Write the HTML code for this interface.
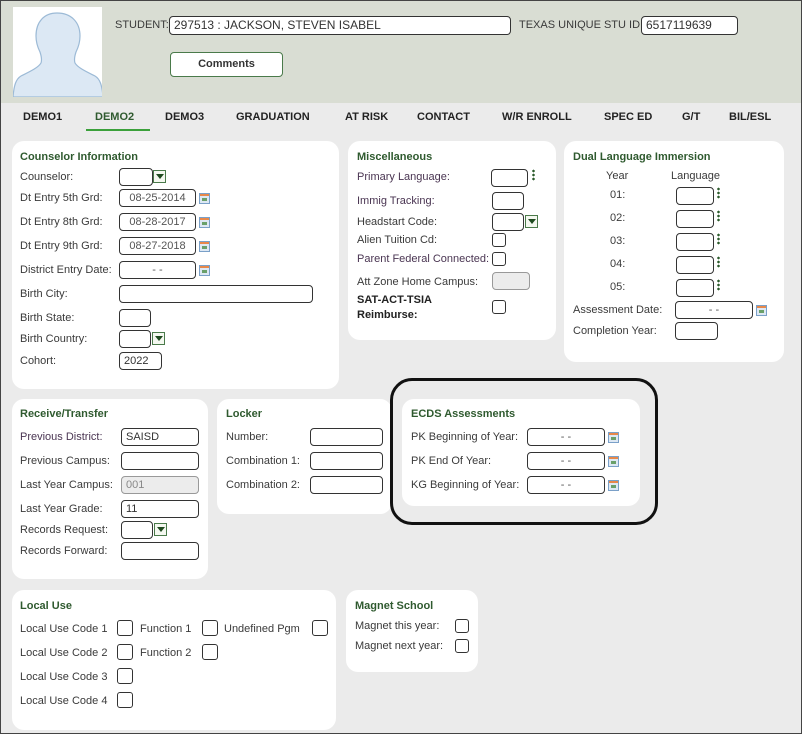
<!DOCTYPE html><html><head><meta charset="utf-8"><style>
*{box-sizing:border-box;margin:0;padding:0}
body{width:802px;height:734px;position:relative;background:#ebebeb;font-family:"Liberation Sans",sans-serif;overflow:hidden}
#frame{position:absolute;left:0;top:0;width:802px;height:734px;border:1px solid #444;pointer-events:none;z-index:9}
.hd{position:absolute;left:0;top:0;width:802px;height:103px;background:#d9ddd3}
.p{position:absolute;background:#fff;border-radius:12px}
.l{position:absolute;font-size:11px;line-height:14px;color:#3a3a3a;white-space:nowrap}
.pu{color:#4a3552}
.t{position:absolute;font-size:11px;line-height:14px;color:#2f5a2f;font-weight:bold;white-space:nowrap}
.i{position:absolute;height:18px;border:1.3px solid #333;border-radius:4px;background:#fff;font-size:11px;line-height:16px;padding-left:4px;color:#333;white-space:nowrap}
.g{background:#ececec;border-color:#999;color:#888}
.c{position:absolute;width:14px;height:14px;border:1.3px solid #333;border-radius:3px;background:#fff}
.dd{position:absolute;width:13px;height:13px;border:1px solid #4a7a4a;background:#f4f8f0}
.dd:after{content:"";position:absolute;left:2px;top:3px;border-left:4px solid transparent;border-right:4px solid transparent;border-top:5px solid #1f4a1f}
.cal{position:absolute;width:11px;height:11px;border:1px solid #7aa0c8;background:#dde8f4}
.cal:before{content:"";position:absolute;left:0;top:0;width:9px;height:2px;background:#e8884a}
.cal:after{content:"";position:absolute;left:2px;top:4px;width:5px;height:3px;background:#6aa06a}
.dots{position:absolute;width:3px;height:12px;background:radial-gradient(circle,#2a5a2a 1.2px,transparent 1.4px) 0 0/3px 4px}
.tab{position:absolute;top:111px;font-size:11px;font-weight:bold;color:#222;white-space:nowrap}
.dt{text-align:center;padding:0;color:#555}
</style></head><body>
<div class="hd"></div>
<div style="position:absolute;left:13px;top:7px;width:89px;height:90px;background:#fff;overflow:hidden">
<svg width="89" height="90" viewBox="0 0 89 90"><path d="M44 6c-13 0-21 9-21 23 0 7 2 12 4 16 1 3 2 8 1 11-3 5-12 9-20 13-5 3-7 9-8 21h90c-1-12-3-18-8-21-8-4-17-8-20-13-1-3 0-8 1-11 2-4 4-9 4-16 0-14-9-23-23-23z" fill="#dce8f4" stroke="#9cbad6" stroke-width="1.2"/></svg></div>
<div class="l" style="left:115px;top:18px">STUDENT:</div>
<div class="i" style="left:169px;top:16px;width:342px;height:19px;font-size:12px">297513 : JACKSON, STEVEN ISABEL</div>
<div class="l" style="left:519px;top:18px">TEXAS UNIQUE STU ID:</div>
<div class="i" style="left:641px;top:16px;width:97px;height:19px;font-size:12px">6517119639</div>
<div style="position:absolute;left:170px;top:52px;width:113px;height:25px;border:1.5px solid #4a7a4a;border-radius:4px;background:#fff;font-size:11px;font-weight:bold;color:#333;text-align:center;line-height:22px">Comments</div>

<div class="tab" style="left:23px">DEMO1</div>
<div class="tab" style="left:95px;color:#2f5a2f">DEMO2</div>
<div style="position:absolute;left:86px;top:129px;width:64px;height:2px;background:#3aa03a"></div>
<div class="tab" style="left:165px">DEMO3</div>
<div class="tab" style="left:236px">GRADUATION</div>
<div class="tab" style="left:345px">AT RISK</div>
<div class="tab" style="left:417px">CONTACT</div>
<div class="tab" style="left:502px">W/R ENROLL</div>
<div class="tab" style="left:604px">SPEC ED</div>
<div class="tab" style="left:682px">G/T</div>
<div class="tab" style="left:729px">BIL/ESL</div>

<div class="p" style="left:12px;top:141px;width:327px;height:248px"></div>
<div class="p" style="left:348px;top:141px;width:208px;height:199px"></div>
<div class="p" style="left:564px;top:141px;width:220px;height:221px"></div>
<div class="p" style="left:12px;top:399px;width:196px;height:180px"></div>
<div class="p" style="left:217px;top:399px;width:175px;height:115px"></div>
<div class="p" style="left:402px;top:399px;width:238px;height:107px"></div>
<div style="position:absolute;left:390px;top:378px;width:268px;height:147px;border:3px solid #111;border-radius:22px"></div>
<div class="p" style="left:12px;top:590px;width:324px;height:140px"></div>
<div class="p" style="left:346px;top:590px;width:132px;height:82px"></div>

<div class="t" style="left:20px;top:150px">Counselor Information</div>
<div class="l" style="left:20px;top:170px">Counselor:</div><div class="i" style="left:119px;top:168px;width:34px"></div><div class="dd" style="left:153px;top:170px"></div>
<div class="l" style="left:20px;top:191px">Dt Entry 5th Grd:</div><div class="i dt" style="left:119px;top:189px;width:77px">08-25-2014</div><div class="cal" style="left:199px;top:193px"></div>
<div class="l" style="left:20px;top:215px">Dt Entry 8th Grd:</div><div class="i dt" style="left:119px;top:213px;width:77px">08-28-2017</div><div class="cal" style="left:199px;top:217px"></div>
<div class="l" style="left:20px;top:239px">Dt Entry 9th Grd:</div><div class="i dt" style="left:119px;top:237px;width:77px">08-27-2018</div><div class="cal" style="left:199px;top:241px"></div>
<div class="l" style="left:20px;top:263px">District Entry Date:</div><div class="i dt" style="left:119px;top:261px;width:77px">- -</div><div class="cal" style="left:199px;top:265px"></div>
<div class="l" style="left:20px;top:287px">Birth City:</div><div class="i" style="left:119px;top:285px;width:194px"></div>
<div class="l" style="left:20px;top:311px">Birth State:</div><div class="i" style="left:119px;top:309px;width:32px"></div>
<div class="l" style="left:20px;top:332px">Birth Country:</div><div class="i" style="left:119px;top:330px;width:32px"></div><div class="dd" style="left:152px;top:332px"></div>
<div class="l" style="left:20px;top:354px">Cohort:</div><div class="i" style="left:119px;top:352px;width:43px">2022</div>

<div class="t" style="left:357px;top:150px">Miscellaneous</div>
<div class="l pu" style="left:357px;top:170px">Primary Language:</div><div class="i" style="left:491px;top:169px;width:37px"></div><div class="dots" style="left:532px;top:169px"></div>
<div class="l pu" style="left:357px;top:194px">Immig Tracking:</div><div class="i" style="left:492px;top:192px;width:32px"></div>
<div class="l" style="left:357px;top:215px">Headstart Code:</div><div class="i" style="left:492px;top:213px;width:32px"></div><div class="dd" style="left:525px;top:215px"></div>
<div class="l" style="left:357px;top:233px">Alien Tuition Cd:</div><div class="c" style="left:492px;top:233px"></div>
<div class="l pu" style="left:357px;top:252px">Parent Federal Connected:</div><div class="c" style="left:492px;top:252px"></div>
<div class="l" style="left:357px;top:275px">Att Zone Home Campus:</div><div class="i g" style="left:492px;top:272px;width:38px"></div>
<div class="l" style="left:357px;top:293px;font-weight:bold;color:#222;line-height:15px">SAT-ACT-TSIA<br>Reimburse:</div><div class="c" style="left:492px;top:300px"></div>

<div class="t" style="left:573px;top:150px">Dual Language Immersion</div>
<div class="l" style="left:606px;top:169px">Year</div><div class="l" style="left:671px;top:169px">Language</div>
<div class="l" style="left:610px;top:188px">01:</div><div class="i" style="left:676px;top:187px;width:38px"></div><div class="dots" style="left:717px;top:187px"></div>
<div class="l" style="left:610px;top:211px">02:</div><div class="i" style="left:676px;top:210px;width:38px"></div><div class="dots" style="left:717px;top:210px"></div>
<div class="l" style="left:610px;top:234px">03:</div><div class="i" style="left:676px;top:233px;width:38px"></div><div class="dots" style="left:717px;top:233px"></div>
<div class="l" style="left:610px;top:257px">04:</div><div class="i" style="left:676px;top:256px;width:38px"></div><div class="dots" style="left:717px;top:256px"></div>
<div class="l" style="left:610px;top:280px">05:</div><div class="i" style="left:676px;top:279px;width:38px"></div><div class="dots" style="left:717px;top:279px"></div>
<div class="l" style="left:573px;top:303px">Assessment Date:</div><div class="i dt" style="left:675px;top:301px;width:78px">- -</div><div class="cal" style="left:756px;top:305px"></div>
<div class="l" style="left:573px;top:324px">Completion Year:</div><div class="i" style="left:675px;top:322px;width:43px"></div>

<div class="t" style="left:20px;top:407px">Receive/Transfer</div>
<div class="l pu" style="left:20px;top:430px">Previous District:</div><div class="i" style="left:121px;top:428px;width:78px">SAISD</div>
<div class="l" style="left:20px;top:454px">Previous Campus:</div><div class="i" style="left:121px;top:452px;width:78px"></div>
<div class="l" style="left:20px;top:478px">Last Year Campus:</div><div class="i g" style="left:121px;top:476px;width:78px">001</div>
<div class="l" style="left:20px;top:502px">Last Year Grade:</div><div class="i" style="left:121px;top:500px;width:78px">11</div>
<div class="l" style="left:20px;top:523px">Records Request:</div><div class="i" style="left:121px;top:521px;width:32px"></div><div class="dd" style="left:154px;top:523px"></div>
<div class="l" style="left:20px;top:544px">Records Forward:</div><div class="i" style="left:121px;top:542px;width:78px"></div>

<div class="t" style="left:226px;top:407px">Locker</div>
<div class="l" style="left:226px;top:430px">Number:</div><div class="i" style="left:310px;top:428px;width:73px"></div>
<div class="l" style="left:226px;top:454px">Combination 1:</div><div class="i" style="left:310px;top:452px;width:73px"></div>
<div class="l" style="left:226px;top:478px">Combination 2:</div><div class="i" style="left:310px;top:476px;width:73px"></div>

<div class="t" style="left:411px;top:407px">ECDS Assessments</div>
<div class="l" style="left:411px;top:430px">PK Beginning of Year:</div><div class="i dt" style="left:527px;top:428px;width:78px">- -</div><div class="cal" style="left:608px;top:432px"></div>
<div class="l" style="left:411px;top:454px">PK End Of Year:</div><div class="i dt" style="left:527px;top:452px;width:78px">- -</div><div class="cal" style="left:608px;top:456px"></div>
<div class="l" style="left:411px;top:478px">KG Beginning of Year:</div><div class="i dt" style="left:527px;top:476px;width:78px">- -</div><div class="cal" style="left:608px;top:480px"></div>

<div class="t" style="left:20px;top:599px">Local Use</div>
<div class="l" style="left:20px;top:622px">Local Use Code 1</div><div class="c" style="left:117px;top:620px;width:16px;height:16px"></div>
<div class="l" style="left:20px;top:646px">Local Use Code 2</div><div class="c" style="left:117px;top:644px;width:16px;height:16px"></div>
<div class="l" style="left:20px;top:670px">Local Use Code 3</div><div class="c" style="left:117px;top:668px;width:16px;height:16px"></div>
<div class="l" style="left:20px;top:694px">Local Use Code 4</div><div class="c" style="left:117px;top:692px;width:16px;height:16px"></div>
<div class="l" style="left:140px;top:622px">Function 1</div><div class="c" style="left:202px;top:620px;width:16px;height:16px"></div>
<div class="l" style="left:140px;top:646px">Function 2</div><div class="c" style="left:202px;top:644px;width:16px;height:16px"></div>
<div class="l" style="left:224px;top:622px">Undefined Pgm</div><div class="c" style="left:312px;top:620px;width:16px;height:16px"></div>

<div class="t" style="left:355px;top:599px">Magnet School</div>
<div class="l" style="left:355px;top:619px">Magnet this year:</div><div class="c" style="left:455px;top:619px"></div>
<div class="l" style="left:355px;top:639px">Magnet next year:</div><div class="c" style="left:455px;top:639px"></div>
<div id="frame"></div>
</body></html>
